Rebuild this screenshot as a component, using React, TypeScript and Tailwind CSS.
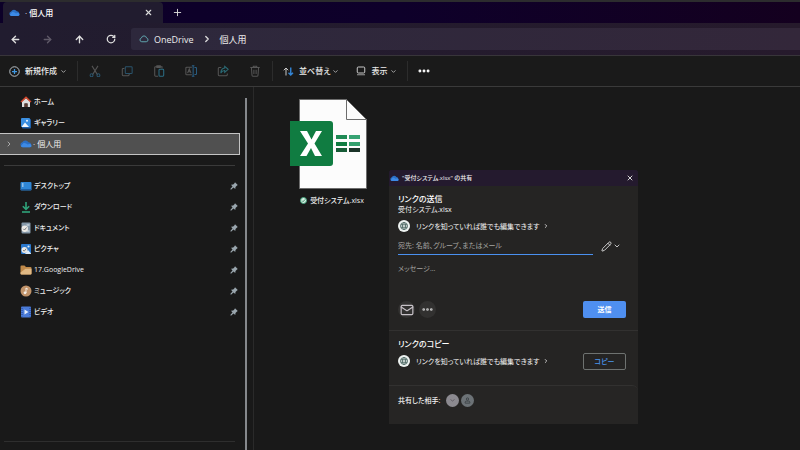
import { useState } from 'react';
import type { ReactNode } from 'react';
import {
  ArrowLeft,
  ArrowRight,
  ArrowUp,
  ChevronDown,
  ChevronRight,
  Ellipsis,
  Mail,
  Pencil,
  Plus,
  RotateCw,
  X,
} from 'lucide-react';

interface QuickItem {
  id: string;
  name: string;
  icon: ReactNode;
}

function OneDriveIcon({ className }: { className: string }) {
  return (
    <svg viewBox="0 0 22 14" className={className} aria-hidden="true">
      <path d="M5 13a4.6 4.6 0 0 1-.8-9A6.6 6.6 0 0 1 15.600 3.600 5 5 0 0 1 18 13z" fill="#2b6fc4" />
      <path d="M6 5.500c3-1.500 6 1 8 2.500 2-2 6-1.500 7 1.200A3 3 0 0 1 18.500 13H5A4.600 4.600 0 0 1 1.500 10.500z" fill="#3d8ae6" />
    </svg>
  );
}

function CloudOutline() {
  return (
    <svg viewBox="0 0 20 14" className="w-[10px] h-[8px] shrink-0" fill="none" stroke="#5fa3ad" strokeWidth="2" aria-hidden="true">
      <path d="M5.500 12.500a3.800 3.800 0 0 1-.6-7.500 5.200 5.200 0 0 1 10.200 0 3.800 3.800 0 0 1-.6 7.500z" />
    </svg>
  );
}

function HomeIcon() {
  return (
    <svg viewBox="0 0 12 12" className="w-[12px] h-[12px]" aria-hidden="true">
      <path d="M2 5.500 6 2l4 3.500V11H7.500V7.500h-3V11H2z" fill="#dedede" />
      <path d="M4.500 7.500h3V11h-3z" fill="#5c3a30" />
      <path d="M1 6 6 1.300 11 6" fill="none" stroke="#d4472c" strokeWidth="1.500" />
    </svg>
  );
}

function GalleryIcon() {
  return (
    <svg viewBox="0 0 12 12" className="w-[12px] h-[12px]" aria-hidden="true">
      <rect x="2" y="2" width="9" height="9.500" rx="1" fill="#1f5fa8" />
      <rect x="1" y="1" width="9" height="9" rx="1" fill="#3a8ee0" />
      <path d="M1.500 10 5 5.500 9 10z" fill="#f2f7fc" />
      <circle cx="7" cy="3.700" r="1" fill="#f2f7fc" />
    </svg>
  );
}

function DesktopIcon() {
  return (
    <svg viewBox="0 0 12 12" className="w-[12px] h-[12px]" aria-hidden="true">
      <rect x="0.500" y="2" width="11" height="8.500" rx="1" fill="#2f86d6" />
      <path d="M2 4h1.500M2 6h1.500" stroke="#e8f3fd" />
      <path d="M.5 9.500h11" stroke="#1c5fa6" />
    </svg>
  );
}

function DownloadIcon() {
  return (
    <svg viewBox="0 0 12 12" className="w-[12px] h-[12px]" fill="none" stroke="#2fa37a" strokeWidth="1.600" aria-hidden="true">
      <path d="M6 1v7M2.800 5.200 6 8.300l3.200-3.100" />
      <path d="M2 11h8" />
    </svg>
  );
}

function DocumentIcon() {
  return (
    <svg viewBox="0 0 12 12" className="w-[12px] h-[12px]" aria-hidden="true">
      <rect x="1.500" y="0.500" width="9" height="11" rx="1" fill="#8598a8" />
      <path d="M6.500 3h3M7 9h2.500" stroke="#dfe7ee" />
      <circle cx="4.800" cy="6.800" r="3.200" fill="#eceae6" />
      <path d="M3.300 6.800 4.500 8l2-2.500" fill="none" stroke="#707070" strokeWidth="0.900" />
    </svg>
  );
}

function PictureIcon() {
  return (
    <svg viewBox="0 0 12 12" className="w-[12px] h-[12px]" aria-hidden="true">
      <rect x="1" y="1" width="10" height="10" rx="1" fill="#2b78cc" />
      <path d="M5 11 8 7l3 3.500V11z" fill="#dcebfa" />
      <circle cx="8.500" cy="3.500" r="1.100" fill="#dcebfa" />
      <circle cx="4.500" cy="7" r="3" fill="#eceae6" />
      <path d="M3.100 7 4.200 8.200l2-2.500" fill="none" stroke="#707070" strokeWidth="0.900" />
    </svg>
  );
}

function FolderIcon() {
  return (
    <svg viewBox="0 0 12 12" className="w-[12px] h-[12px]" aria-hidden="true">
      <path d="M.5 2.500a1 1 0 0 1 1-1H4.500L6 3h4.500a1 1 0 0 1 1 1v5.500a1 1 0 0 1-1 1h-9a1 1 0 0 1-1-1z" fill="#c08a4a" />
      <path d="M.5 8.500 5.500 4.800h6v4.700a1 1 0 0 1-1 1h-9a1 1 0 0 1-1-1z" fill="#e0b884" />
    </svg>
  );
}

function MusicIcon() {
  return (
    <svg viewBox="0 0 12 12" className="w-[12px] h-[12px]" aria-hidden="true">
      <circle cx="6" cy="6" r="5.500" fill="#c0936a" />
      <circle cx="5" cy="7.800" r="1.400" fill="#f6efe8" />
      <path d="M6 8V3l2 1.300" fill="none" stroke="#f6efe8" />
    </svg>
  );
}

function VideoIcon() {
  return (
    <svg viewBox="0 0 12 12" className="w-[12px] h-[12px]" aria-hidden="true">
      <rect x="1" y="0.500" width="10" height="11" rx="1" fill="#4a7bd8" />
      <path d="M2 2v8.500M10 2v8.500" stroke="#23418f" strokeDasharray="1 1" />
      <path d="M4.500 3.500v5L8.500 6z" fill="#e6effc" />
    </svg>
  );
}

function PinIcon() {
  return (
    <svg viewBox="0 0 16 16" className="w-[8px] h-[8px]" fill="#9aa6ae" aria-hidden="true">
      <path d="M10 .5 15.500 6 13.500 7.500 11 10 10.500 14 7 11 2 15.500.5 14 5 9 2 5.500 6.500 5 9 2.500z" />
    </svg>
  );
}

function GlobeBadge() {
  return (
    <svg viewBox="0 0 24 24" className="w-[12px] h-[12px] shrink-0" fill="none" stroke="#3c5a55" strokeWidth="1.600" aria-hidden="true">
      <circle cx="12" cy="12" r="12" fill="#eef3f1" stroke="none" />
      <circle cx="12" cy="12" r="7" />
      <ellipse cx="12" cy="12" rx="3" ry="7" />
      <path d="M5.500 9.500h13M5.500 14.500h13" />
    </svg>
  );
}

function ExcelFileIcon() {
  return (
    <svg viewBox="0 0 77 90" className="w-[77px] h-[90px]" aria-hidden="true">
      <path d="M9.500.5h47l20 20v69h-67z" fill="#fcfcfc" stroke="#6d6d6d" />
      <path d="M56.500.5v20h20z" fill="#fcfcfc" stroke="#6d6d6d" />
      <path d="M46 36h11v4H46z" fill="#1f8a55" />
      <path d="M59 36h11v4H59z" fill="#37a373" />
      <path d="M46 43h11v4H46z" fill="#107c41" />
      <path d="M59 43h11v4H59z" fill="#33a06d" />
      <path d="M46 49h11v4H46z" fill="#185c37" />
      <path d="M59 49h11v4H59z" fill="#1b3328" />
      <path d="M0 22h40a3 3 0 0 1 3 3v39a3 3 0 0 1-3 3H0z" fill="#107c41" />
      <path d="M10 32h7l4.500 8.500L26 32h6l-7.500 12.500L32 57h-7l-4-8-4.500 8H10l8-12.500z" fill="#ffffff" />
    </svg>
  );
}

const toolIcons: { label: string; icon: ReactNode }[] = [
  {
    label: '切り取り',
    icon: (
      <>
        <path d="M3.500 1 10 11.500M10.500 1 4 11.500" />
        <circle cx="3" cy="12" r="1.700" stroke="#2a536b" />
        <circle cx="11" cy="12" r="1.700" stroke="#2a536b" />
      </>
    ),
  },
  {
    label: 'コピー',
    icon: (
      <>
        <path d="M4 4H2.500a1 1 0 0 0-1 1v6.500a1 1 0 0 0 1 1h6a1 1 0 0 0 1-1V10.500" />
        <rect x="5" y="2" width="8" height="8" rx="1" stroke="#2a536b" />
      </>
    ),
  },
  {
    label: '貼り付け',
    icon: (
      <>
        <path d="M6 13H3a1 1 0 0 1-1-1V3a1 1 0 0 1 1-1h7.500v2M4.500 1h4v2h-4z" />
        <rect x="7" y="5" width="5.500" height="8" rx="1" stroke="#2b6d84" />
      </>
    ),
  },
  {
    label: '名前の変更',
    icon: (
      <>
        <path d="M8 2.500H2a1 1 0 0 0-1 1v7a1 1 0 0 0 1 1h6M3 9.500 5 4.500l2 5M3.700 8h2.600" />
        <path d="M9.500 1v12M8 1h3M8 13h3M11 3h1.500a1 1 0 0 1 1 1v6a1 1 0 0 1-1 1H11" stroke="#2a5f85" />
      </>
    ),
  },
  {
    label: '共有',
    icon: (
      <>
        <path d="M5 3H2.500a1 1 0 0 0-1 1v7.500a1 1 0 0 0 1 1h8.500a1 1 0 0 0 1-1V10" />
        <path d="M9 1.500 13 5 9 8.500V6.500C7 6.500 5.500 7.500 4.500 9.500 4.500 6 6 3.800 9 3.500z" stroke="#2b6d78" />
      </>
    ),
  },
  {
    label: '削除',
    icon: (
      <>
        <path d="M1.500 3h11M5 3V1.500h4V3M2.800 3l.7 9a1 1 0 0 0 1 1h5a1 1 0 0 0 1-1l.7-9M5.700 5.500v5M8.300 5.500v5" />
      </>
    ),
  },
];

const quickAccess: QuickItem[] = [
  { id: 'desktop', name: 'デスクトップ', icon: <DesktopIcon /> },
  { id: 'downloads', name: 'ダウンロード', icon: <DownloadIcon /> },
  { id: 'documents', name: 'ドキュメント', icon: <DocumentIcon /> },
  { id: 'pictures', name: 'ピクチャ', icon: <PictureIcon /> },
  { id: 'googledrive', name: '17.GoogleDrive', icon: <FolderIcon /> },
  { id: 'music', name: 'ミュージック', icon: <MusicIcon /> },
  { id: 'videos', name: 'ビデオ', icon: <VideoIcon /> },
];

function TitleBar() {
  return (
    <div className="flex h-[23px] border-t-2 border-[#2c2c2e] bg-linear-to-r from-[#0c0028] via-[#0e002a] to-[#14001f] pl-[3px]">
      <div className="flex w-[160px] items-center rounded-t-[4px] bg-[#211c2f] pl-[6px] pr-[10px]">
        <OneDriveIcon className="w-[11px] h-[8px]" />
        <span className="ml-[5px] flex-1 text-[8px] font-medium text-white">· 個人用</span>
        <button aria-label="タブを閉じる">
          <X className="w-[9px] h-[9px] text-[#dcdcdc]" strokeWidth={3} />
        </button>
      </div>
      <button className="ml-[9px]" aria-label="新しいタブ">
        <Plus className="w-[11px] h-[11px] text-[#dcdcdc]" />
      </button>
    </div>
  );
}

function AddressBar() {
  return (
    <div className="flex h-[33px] items-center border-b border-[#38353a] bg-linear-to-r from-[#211c2f] to-[#261a2c] pl-[10px]">
      <nav className="flex w-[121px] items-center gap-[21px]">
        <button aria-label="戻る"><ArrowLeft className="w-[11px] h-[11px] text-[#dedede]" strokeWidth={3} /></button>
        <button aria-label="進む"><ArrowRight className="w-[11px] h-[11px] text-[#5f5a68]" strokeWidth={3} /></button>
        <button aria-label="上へ"><ArrowUp className="w-[11px] h-[11px] text-[#dedede]" strokeWidth={3} /></button>
        <button aria-label="更新"><RotateCw className="w-[10px] h-[10px] text-[#dedede]" strokeWidth={3} /></button>
      </nav>
      <div className="flex h-[22px] flex-1 items-center rounded-l-[3px] bg-linear-to-r from-[#2d283c] to-[#33273a] pl-[8px] text-[9px] text-[#ececec]">
        <CloudOutline />
        <a href="#onedrive" className="ml-[5px]">OneDrive</a>
        <ChevronRight className="mx-[8px] w-[10px] h-[10px] text-[#dedede]" strokeWidth={3} />
        <a href="#personal">個人用</a>
      </div>
    </div>
  );
}

function Toolbar() {
  return (
    <div className="flex h-[31px] items-center border-b border-[#3a3a3a] bg-[#1a1a1a] pl-[9px] text-[8px] font-medium text-[#ececec]">
      <button className="flex items-center">
        <svg viewBox="0 0 22 22" className="w-[11px] h-[11px]" fill="none" aria-hidden="true">
          <circle cx="11" cy="11" r="9.500" stroke="#b9c0c6" strokeWidth="2" />
          <path d="M11 6v10M6 11h10" stroke="#3f97e0" strokeWidth="2.500" />
        </svg>
        <span className="ml-[5px]">新規作成</span>
        <ChevronDown className="ml-[3px] w-[7px] h-[7px] text-[#b0b0b0]" strokeWidth={3} />
      </button>
      <div className="ml-[10px] h-[20px] w-px bg-[#2c2c2c]" />
      <div className="ml-[11px] flex gap-[20px]">
        {toolIcons.map(tool => (
          <button key={tool.label} aria-label={tool.label} disabled>
            <svg viewBox="0 0 14 14" className="w-[12px] h-[12px]" fill="none" stroke="#555555" strokeWidth="1.200" aria-hidden="true">
              {tool.icon}
            </svg>
          </button>
        ))}
      </div>
      <div className="ml-[11px] h-[20px] w-px bg-[#2c2c2c]" />
      <button className="ml-[10px] flex items-center">
        <svg viewBox="0 0 22 18" className="w-[11px] h-[9px]" fill="none" strokeWidth="2" aria-hidden="true">
          <path d="M6 17V2M1.500 6.500 6 2l4.500 4.500" stroke="#c8c8c8" />
          <path d="M15.500 1v15M11 11.500l4.500 4.500 4.500-4.500" stroke="#3486d8" strokeWidth="2.800" />
        </svg>
        <span className="ml-[5px]">並べ替え</span>
        <ChevronDown className="ml-[2px] w-[7px] h-[7px] text-[#b0b0b0]" strokeWidth={3} />
      </button>
      <button className="ml-[17px] flex items-center">
        <svg viewBox="0 0 20 20" className="w-[10px] h-[10px]" fill="none" strokeWidth="2" aria-hidden="true">
          <rect x="2.500" y="2" width="15" height="12" rx="2" stroke="#c8c8c8" />
          <path d="M2 17.500h16" stroke="#9a9a9a" />
        </svg>
        <span className="ml-[5px]">表示</span>
        <ChevronDown className="ml-[3px] w-[7px] h-[7px] text-[#b0b0b0]" strokeWidth={3} />
      </button>
      <div className="ml-[10px] h-[20px] w-px bg-[#2c2c2c]" />
      <button className="ml-[9px]" aria-label="もっと見る">
        <Ellipsis className="w-[14px] h-[14px] text-white" strokeWidth={3} />
      </button>
    </div>
  );
}

function Sidebar() {
  const [selected, setSelected] = useState('personal');

  return (
    <aside className="flex w-[254px] shrink-0 border-r border-[#2a2a2a] text-[7px] font-medium text-[#f0f0f0]">
      <div className="flex flex-1 flex-col pt-[4px]">
        <button className="flex h-[21px] items-center pl-[20px]">
          <HomeIcon />
          <span className="ml-[2px]">ホーム</span>
        </button>
        <button className="flex h-[21px] items-center pl-[20px]">
          <GalleryIcon />
          <span className="ml-[2px]">ギャラリー</span>
        </button>
        <button className="flex h-[22px] items-center border border-l-0 border-[#c4c4c4] bg-[#505050] pl-[5px] text-[8px]">
          <ChevronRight className="w-[8px] h-[8px] text-[#a8a8a8]" strokeWidth={3} />
          <OneDriveIcon className="ml-[7px] w-[12px] h-[8px]" />
          <span className="ml-px font-normal">· 個人用</span>
        </button>
        <hr className="ml-[4px] mr-[5px] mt-[10px] border-[#3a3a3a]" />
        <div className="mt-[9px] flex flex-1 flex-col">
          {quickAccess.map(item => (
            <button
              key={item.id}
              className={`flex h-[21px] items-center pl-[20px] pr-[2px] ${selected === item.id ? 'bg-[#505050]' : ''}`}
              onClick={() => setSelected(item.id)}
            >
              {item.icon}
              <span className="ml-[2px] flex-1 text-left">{item.name}</span>
              <PinIcon />
            </button>
          ))}
        </div>
        <hr className="mb-[8px] ml-[4px] mr-[5px] border-[#2e2e2e]" />
      </div>
      <div className="ml-[5px] mr-[6px] mt-[11px] w-[2px] bg-[#85888c]" />
    </aside>
  );
}

function LinkScope() {
  return (
    <button className="flex items-center text-[7px] text-[#f2f2f2]">
      <GlobeBadge />
      <span className="ml-[6px]">リンクを知っていれば誰でも編集できます</span>
      <ChevronRight className="ml-[3px] w-[6px] h-[6px]" strokeWidth={3} />
    </button>
  );
}

function ShareDialog() {
  const [recipient, setRecipient] = useState('');
  const [message, setMessage] = useState('');

  return (
    <section
      role="dialog"
      aria-label="共有"
      className="absolute left-[135px] top-[83px] w-[249px] rounded-t-[3px] bg-[#252423] text-[7px] text-[#f2f2f2]"
    >
      <header className="flex h-[16px] items-center rounded-t-[3px] bg-[#241a2e] pl-px pr-[4px] text-[6px]">
        <OneDriveIcon className="w-[9px] h-[7px]" />
        <span className="ml-[3px] flex-1 font-medium">"受付システム.xlsx" の共有</span>
        <button aria-label="閉じる"><X className="w-[8px] h-[8px] text-[#d8d8d8]" strokeWidth={3} /></button>
      </header>

      <div className="flex h-[145px] flex-col border-b border-[#323130] px-[9px] pt-[7px]">
        <h2 className="text-[8px] leading-[12px] font-medium text-white">リンクの送信</h2>
        <p className="leading-[10px]">受付システム.xlsx</p>
        <div className="mt-[5px] flex">
          <LinkScope />
        </div>
        <div className="mt-[5px] flex items-center">
          <input
            aria-label="宛先"
            value={recipient}
            onChange={(e) => setRecipient(e.target.value)}
            placeholder="宛先: 名前、グループ、またはメール"
            className="h-[18px] w-[195px] border-b border-b-[#4a90f0] outline-none placeholder:text-[#a6a4a2]"
          />
          <button className="ml-[8px] flex items-center" aria-label="編集可能">
            <Pencil className="w-[11px] h-[11px] text-[#dcdcdc]" />
            <ChevronDown className="ml-px w-[8px] h-[8px] text-[#c0c0c0]" strokeWidth={3} />
          </button>
        </div>
        <textarea
          aria-label="メッセージ"
          value={message}
          onChange={(e) => setMessage(e.target.value)}
          placeholder="メッセージ..."
          className="mt-[10px] min-h-0 flex-1 resize-none outline-none placeholder:text-[#a6a4a2]"
        />
        <div className="mb-[12px] flex items-center">
          <button className="flex h-[17px] w-[17px] items-center justify-center rounded-full bg-[#323130]" aria-label="メールで送信">
            <Mail className="w-[14px] h-[14px] shrink-0 text-[#c8c2c8]" />
          </button>
          <button className="ml-[4px] flex h-[17px] w-[17px] items-center justify-center rounded-full bg-[#323130]" aria-label="その他">
            <Ellipsis className="w-[13px] h-[13px] text-[#c8c8c8]" strokeWidth={3} />
          </button>
          <button className="ml-auto mr-[3px] h-[17px] w-[43px] rounded-[2px] bg-[#4f8ff0] font-bold text-white">送信</button>
        </div>
      </div>

      <div className="flex h-[54px] items-start px-[9px] pt-[7px]">
        <div>
          <h2 className="text-[8px] leading-[12px] font-medium text-white">リンクのコピー</h2>
          <div className="mt-[5px]">
            <LinkScope />
          </div>
        </div>
        <button className="ml-auto mr-[3px] mt-[15px] h-[17px] w-[43px] rounded-[2px] border border-[#6e7270] font-medium text-[#4a96ee]">コピー</button>
      </div>

      <footer className="flex h-[39px] items-center rounded-tr-[6px] border-t border-[#323130] bg-[#262524] px-[9px] pb-[10px]">
        <span className="font-medium">共有した相手:</span>
        <span className="ml-[6px] flex h-[13px] w-[13px] items-center justify-center rounded-full bg-[#8c8a90]">
          <svg viewBox="0 0 10 6" className="w-[5px] h-[3px]" fill="none" stroke="#55535a" strokeWidth="1.500" aria-hidden="true">
            <path d="M1 1 5 4l4-3" />
          </svg>
        </span>
        <span className="ml-[2px] flex h-[13px] w-[13px] items-center justify-center rounded-full bg-[#6c7276]">
          <svg viewBox="0 0 12 12" className="w-[7px] h-[7px]" fill="none" stroke="#3a4044" strokeWidth="1.500" aria-hidden="true">
            <circle cx="6" cy="3.500" r="2" />
            <path d="M2 10.500V9a2 2 0 0 1 2-2h4a2 2 0 0 1 2 2v1.500z" />
          </svg>
        </span>
      </footer>
    </section>
  );
}

export default function App() {
  return (
    <div className="flex min-h-screen flex-col bg-[#191919] font-['Open_Sans','Noto_Sans_CJK_JP',sans-serif] leading-none [font-feature-settings:'palt']">
      <TitleBar />
      <AddressBar />
      <Toolbar />
      <div className="flex flex-1">
        <Sidebar />
        <main className="relative flex-1 bg-[#191919] pl-[36px] pt-[12px]">
          <button className="flex flex-col items-center text-[7px] font-medium text-[#f0f0f0]">
            <ExcelFileIcon />
            <span className="mt-[8px] flex items-center pl-[7px]">
              <svg viewBox="0 0 14 14" className="mr-[3px] w-[7px] h-[7px]" aria-hidden="true">
                <circle cx="7" cy="7" r="6" fill="#d6efe2" stroke="#3f9f78" strokeWidth="2" />
                <path d="M4 7.200 6.200 9.400 10 5" fill="none" stroke="#2c7f5c" strokeWidth="1.800" />
              </svg>
              受付システム.xlsx
            </span>
          </button>
          <ShareDialog />
        </main>
      </div>
    </div>
  );
}
